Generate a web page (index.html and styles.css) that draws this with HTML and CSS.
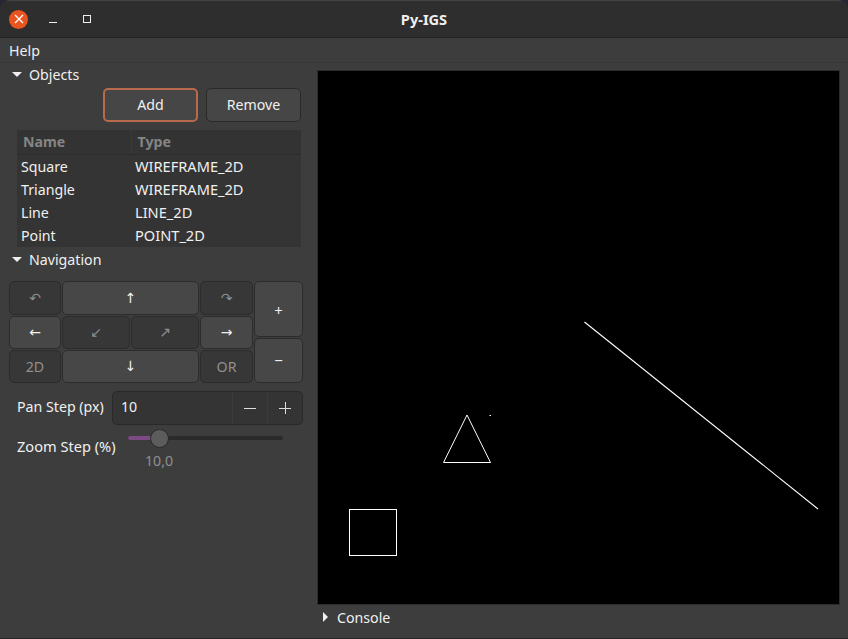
FILE: index.html
```html
<!DOCTYPE html>
<html lang="en">
<head>
  <meta charset="UTF-8" />
  <title>Py-IGS</title>
  <link rel="stylesheet" href="styles.css">
</head>
<body>
  <div class="window">
    <header class="titlebar">
      <div class="win-buttons">
        <button class="win-close" aria-label="Close">
          <svg width="10" height="10" viewBox="0 0 10 10"><path d="M1 1L9 9M9 1L1 9" stroke="#fff" stroke-width="1.3" fill="none"/></svg>
        </button>
        <span class="win-min"></span>
        <span class="win-max"></span>
      </div>
      <h1 class="win-title">Py-IGS</h1>
    </header>

    <nav class="menubar">Help</nav>

    <main class="content">
      <aside class="side">
        <div class="expander expander-objects"><span class="arrow-down"></span>Objects</div>
        <div class="actions">
          <button class="btn btn-focus">Add</button>
          <button class="btn">Remove</button>
        </div>
        <table class="objects">
          <thead>
            <tr><th class="col-name">Name</th><th>Type</th></tr>
          </thead>
          <tbody>
            <tr><td>Square</td><td>WIREFRAME_2D</td></tr>
            <tr><td>Triangle</td><td>WIREFRAME_2D</td></tr>
            <tr><td>Line</td><td>LINE_2D</td></tr>
            <tr><td>Point</td><td>POINT_2D</td></tr>
          </tbody>
        </table>

        <div class="expander expander-nav"><span class="arrow-down"></span>Navigation</div>
        <div class="pad">
          <div class="pad-grid">
            <button class="key key-dim glyph">↶</button>
            <button class="key glyph span-2">↑</button>
            <button class="key key-dim glyph">↷</button>
            <button class="key glyph">←</button>
            <button class="key key-dim glyph">↙</button>
            <button class="key key-dim glyph">↗</button>
            <button class="key glyph">→</button>
            <button class="key key-dim">2D</button>
            <button class="key glyph span-2">↓</button>
            <button class="key key-dim">OR</button>
          </div>
          <div class="pad-zoom">
            <button class="key key-plus">+</button>
            <button class="key key-minus">−</button>
          </div>
        </div>

        <div class="pan-row">
          <label class="field-label">Pan Step (px)</label>
          <div class="spin">
            <span class="spin-value">10</span>
            <button class="spin-btn" aria-label="Decrease">
              <svg width="12" height="12" viewBox="0 0 12 12"><path d="M0 6.5H12" stroke="#ddd" fill="none"/></svg>
            </button>
            <button class="spin-btn" aria-label="Increase">
              <svg width="12" height="12" viewBox="0 0 12 12"><path d="M0 6.5H12M6.5 0V12" stroke="#ddd" fill="none"/></svg>
            </button>
          </div>
        </div>

        <div class="zoom-row">
          <label class="field-label">Zoom Step (%)</label>
          <div class="slider">
            <div class="track"><div class="track-fill" style="width: 20%"></div></div>
            <span class="knob" style="left: 20%"></span>
            <div class="slider-value">10,0</div>
          </div>
        </div>
      </aside>

      <section class="stage">
        <svg class="canvas" width="521" height="533" viewBox="0 0 521 533">
          <g fill="none" stroke="#fff" stroke-width="1">
            <rect x="31.5" y="438.5" width="47" height="46" />
            <path d="M149 344L125.5 391.5H172.5Z" />
            <path d="M266.5 251L500 438" stroke-width="1.1" />
            <path d="M171.5 344.5H173" />
          </g>
        </svg>
        <div class="expander expander-console"><span class="arrow-right"></span>Console</div>
      </section>
    </main>
  </div>
</body>
</html>
```

FILE: styles.css
```css
* {
  box-sizing: border-box;
}

body {
  margin: 0;
  background-color: #2b2433;
  font-family: "Noto Sans", "Open Sans", sans-serif;
  font-size: 14.2px;
  color: #f0f0f0;
}

button {
  font-family: inherit;
  color: inherit;
}

.window {
  width: 848px;
  height: 639px;
  display: flex;
  flex-direction: column;
  background-color: #3d3d3d;
  border-radius: 10px 10px 0 0;
  border-bottom: 1px solid #262626;
  overflow: hidden;
}

.titlebar {
  height: 38px;
  flex: none;
  display: flex;
  align-items: center;
  justify-content: center;
  position: relative;
  background-color: #2e2e2e;
  border-top: 1px solid #444;
  border-bottom: 1px solid #242424;
}

.win-title {
  margin: 0;
  font-size: 14.6px;
  font-weight: 700;
}

.win-buttons {
  position: absolute;
  left: 9px;
  top: 0;
  height: 100%;
  display: flex;
  align-items: center;
}

.win-close {
  width: 19px;
  height: 19px;
  padding: 0;
  border: none;
  border-radius: 50%;
  background-color: #e95420;
  display: flex;
  align-items: center;
  justify-content: center;
}

.win-min {
  width: 8px;
  height: 1px;
  margin: 6px 0 0 21px;
  background-color: #eee;
}

.win-max {
  width: 8px;
  height: 8px;
  margin: -1px 0 0 26px;
  border: 1px solid #eee;
}

.menubar {
  height: 25px;
  flex: none;
  padding: 2px 9px 0;
  border-bottom: 1px solid #383838;
  line-height: 21px;
}

.content {
  flex: 1;
  display: flex;
  min-height: 0;
}

.side {
  width: 317px;
  flex: none;
  padding: 0 14px 0 9px;
}

.expander {
  display: flex;
  align-items: center;
  height: 24px;
  gap: 7px;
  padding-left: 3px;
}

.expander-objects {
  height: 25px;
  padding-bottom: 2px;
}

.arrow-down {
  width: 0;
  height: 0;
  border-left: 5px solid transparent;
  border-right: 5px solid transparent;
  border-top: 5px solid #f0f0f0;
}

.arrow-right {
  width: 0;
  height: 0;
  border-top: 5px solid transparent;
  border-bottom: 5px solid transparent;
  border-left: 5px solid #f0f0f0;
}

.actions {
  display: flex;
  justify-content: flex-end;
  gap: 8px;
  padding-right: 2px;
}

.btn {
  width: 95px;
  height: 34px;
  padding: 0 0 2px;
  background-color: #464646;
  border: 1px solid #292929;
  border-radius: 5px;
  font-size: 14.2px;
}

.btn-focus {
  border: 2px solid #b96a4c;
}

.objects {
  width: 284px;
  margin: 8px 0 0 8px;
  border-collapse: collapse;
  table-layout: fixed;
  background-color: #343434;
}

.objects th {
  height: 24px;
  padding: 0 0 1px 6px;
  text-align: left;
  font-weight: 700;
  color: #858585;
  background-color: #333;
  border-bottom: 1px solid #2c2c2c;
}

.objects .col-name {
  width: 114px;
  border-right: 1px solid #3a3a3a;
}

.objects td {
  height: 23px;
  padding: 0 0 0 4px;
  line-height: 23px;
  vertical-align: top;
}

.objects td:nth-child(2) {
  font-size: 14.6px;
}

.expander-nav {
  margin-top: 1px;
}

.pad {
  display: flex;
  gap: 1px;
  height: 102px;
  margin-top: 9px;
}

.pad-grid {
  width: 244px;
  display: grid;
  grid-template-columns: 52px 68px 68px 53px;
  grid-template-rows: 34px 33px 33px;
  gap: 1px;
}

.pad-zoom {
  width: 49px;
  display: flex;
  flex-direction: column;
  gap: 1px;
}

.key {
  padding: 0;
  background-color: #474747;
  border: 1px solid #2c2c2c;
  border-radius: 5px;
  font-size: 14.2px;
}

.key-dim {
  background-color: #373737;
  color: #8f8f8f;
}

.key-plus {
  flex: 56;
  font-size: 15px;
  padding-top: 2px;
}

.key-minus {
  flex: 45;
  font-size: 15px;
}

.glyph {
  font-family: "DejaVu Sans", sans-serif;
  font-size: 14px;
}

.span-2 {
  grid-column: span 2;
}

.pad-grid .span-2:nth-child(2) {
  grid-column: 2 / 4;
}

.pan-row {
  display: flex;
  align-items: center;
  margin-top: 8px;
  padding-left: 8px;
}

.field-label {
  white-space: nowrap;
}

.pan-row .field-label {
  padding-bottom: 2px;
}

.spin {
  width: 191px;
  height: 34px;
  margin-left: auto;
  display: flex;
  align-items: center;
  background-color: #343434;
  border: 1px solid #292929;
  border-radius: 5px;
}

.spin-value {
  flex: 1;
  padding: 0 0 2px 8px;
}

.spin-btn {
  width: 35px;
  height: 100%;
  padding: 0;
  background: none;
  border: none;
  border-left: 1px solid #3a3a3a;
  display: flex;
  align-items: center;
  justify-content: center;
}

.zoom-row {
  display: flex;
  margin-top: 4px;
  padding-left: 8px;
  height: 50px;
}

.zoom-row .field-label {
  margin-top: 7px;
  font-size: 14.6px;
}

.slider {
  position: relative;
  width: 155px;
  margin-left: auto;
  margin-right: 20px;
  padding-top: 7px;
}

.track {
  height: 4px;
  background-color: #2a2a2a;
  border-radius: 2px;
  overflow: hidden;
}

.track-fill {
  height: 100%;
  background-color: #7e4a85;
}

.knob {
  position: absolute;
  top: 0;
  width: 19px;
  height: 19px;
  margin-left: -9px;
  background-color: #5c5c5c;
  border: 1px solid #2a2a2a;
  border-radius: 50%;
}

.slider-value {
  margin: 11px 0 0 17px;
  color: #8f8f8f;
}

.stage {
  flex: 1;
  display: flex;
  flex-direction: column;
  padding-top: 8px;
  padding-left: 1px;
}

.canvas {
  display: block;
  flex: none;
  background-color: #000;
  outline: 1px solid #2c2c2c;
}

.expander-console {
  margin-top: 1px;
  height: 24px;
  padding-left: 5px;
  gap: 9px;
}
```
